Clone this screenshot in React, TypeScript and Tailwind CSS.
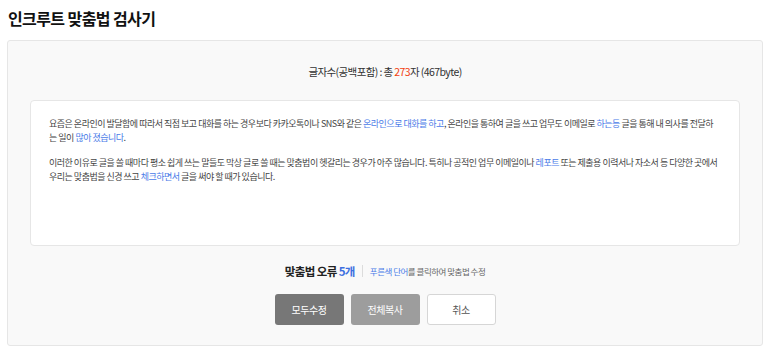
import { ReactNode } from "react"

const Blue = ({ children }: { children: ReactNode }) => <span className="text-[#4a7be8]">{children}</span>

const App = () => {
  return (
    <div className="w-[769px] h-[350px] bg-white px-[7px] font-['Noto_Sans_CJK_KR',sans-serif] text-[#333]">
      <h1 className="h-[40px] pt-[7px] pl-[1px] text-[16px] font-bold tracking-[-0.6px] text-[#111] leading-[22px]">
        인크루트 맞춤법 검사기
      </h1>
      <div className="w-[756px] h-[306px] bg-[#f9f9f9] border border-[#e6e6e6] rounded-[3px] flex flex-col items-center">
        <p className="mt-[23px] text-[10.5px] leading-[16px] tracking-[-0.6px] text-[#333]">
          글자수(공백포함) : 총 <span className="text-[#f2400f]">273</span>자 (467byte)
        </p>
        <div className="mt-[20px] w-[710px] h-[146px] bg-white border border-[#e6e6e6] rounded-[4px] pl-[18px] pr-[14px] pt-[16px] text-[9px] leading-[14px] tracking-[-0.5px] text-[#444]">
          <p>
            요즘은 온라인이 발달함에 따라서 직접 보고 대화를 하는 경우보다 카카오톡이나 SNS와 같은{" "}
            <Blue>온라인으로 대화를 하고</Blue>, 온라인을 통하여 글을 쓰고 업무도 이메일로 <Blue>하는등</Blue> 글을 통해 내
            의사를 전달하
            <br />는 일이 <Blue>많아 졌습니다</Blue>.
          </p>
          <p className="mt-[11px]">
            이러한 이유로 글을 쓸 때마다 평소 쉽게 쓰는 말들도 막상 글로 쓸 때는 맞춤법이 헷갈리는 경우가 아주 많습니다.
            특히나 공적인 업무 이메일이나 <Blue>레포트</Blue> 또는 제출용 이력서나 자소서 등 다양한 곳에서 우리는 맞춤법을
            신경 쓰고 <Blue>체크하면서</Blue> 글을 써야 할 때가 있습니다.
          </p>
        </div>
        <div className="mt-[16px] flex items-center">
          <span className="text-[11.5px] font-bold tracking-[-0.6px] text-[#222] leading-[18px]">
            맞춤법 오류 <span className="text-[#3d6fe0]">5개</span>
          </span>
          <span className="mx-[7px] w-px h-[12px] bg-[#dcdcdc]" />
          <span className="text-[8.5px] tracking-[-0.5px] text-[#666]">
            <span className="text-[#4a7be8]">푸른색 단어</span>를 클릭하여 맞춤법 수정
          </span>
        </div>
        <div className="mt-[14px] flex gap-[7px]">
          <button className="w-[69px] h-[31px] rounded-[3px] bg-[#777] text-white text-[10px] tracking-[-0.5px]">
            모두수정
          </button>
          <button className="w-[69px] h-[31px] rounded-[3px] bg-[#9d9d9d] text-white text-[10px] tracking-[-0.5px]">
            전체복사
          </button>
          <button className="w-[69px] h-[31px] rounded-[3px] bg-white border border-[#d6d6d6] text-[#555] text-[10px] tracking-[-0.5px]">
            취소
          </button>
        </div>
      </div>
    </div>
  )
}

export default App
